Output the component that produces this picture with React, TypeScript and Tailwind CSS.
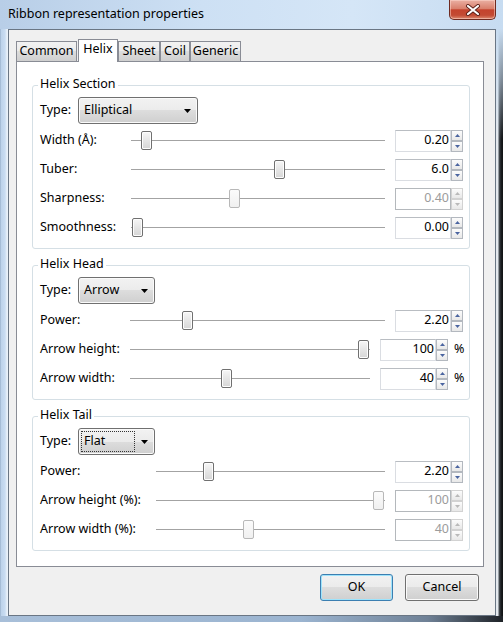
import React from "react";

const FONT = "font-['Noto_Sans','Open_Sans',sans-serif]";

function SpinArrow({ up, disabled }: { up?: boolean; disabled?: boolean }) {
  const c = disabled ? "#b9b9b9" : "#4a64a0";
  return (
    <div
      className={`flex-1 flex items-center justify-center border ${
        disabled ? "border-[#d2d2d2]" : "border-[#b3b8bf]"
      } bg-[linear-gradient(to_bottom,#fcfcfc,#e8e8e8)]`}
    >
      <svg width="5" height="3" viewBox="0 0 5 3">
        <path d={up ? "M0 3 L2.5 0 L5 3Z" : "M0 0 L2.5 3 L5 0Z"} fill={c} />
      </svg>
    </div>
  );
}

function Spin({ value, disabled }: { value: string; disabled?: boolean }) {
  return (
    <div className="flex h-[22px] shrink-0">
      <div
        className={`w-[56px] h-full bg-white border flex items-center justify-end pr-[1px] ${
          disabled
            ? "border-[#b4b8bc] text-[#9c9c9c]"
            : "border-[#dadde2] border-t-[#b9bdc2] text-black"
        }`}
      >
        {value}
      </div>
      <div className="w-[12px] h-full flex flex-col">
        <SpinArrow up disabled={disabled} />
        <SpinArrow disabled={disabled} />
      </div>
    </div>
  );
}

function Slider({ pos, disabled }: { pos: number; disabled?: boolean }) {
  return (
    <div className="relative flex-1 h-[21px] flex items-center">
      <div className="h-px w-full bg-[#a3a3a3]" />
      <div
        className={`absolute top-[1px] w-[11px] h-[19px] rounded-[2px] border ${
          disabled
            ? "border-[#b8b8b8] bg-[linear-gradient(to_bottom,#fbfbfb,#f0f0f0)]"
            : "border-[#707070] bg-[linear-gradient(to_bottom,#f7f7f7,#e4e4e4_55%,#d6d6d6)] shadow-[inset_0_0_0_1px_#fdfdfd]"
        }`}
        style={{ left: pos }}
      />
    </div>
  );
}

function Row({
  label,
  labelW,
  pos,
  value,
  disabled,
  pct,
}: {
  label: string;
  labelW: string;
  pos: number;
  value: string;
  disabled?: boolean;
  pct?: boolean;
}) {
  return (
    <div className={`flex items-center h-[29px] ${pct ? "pr-[4px]" : "pr-[6px]"}`}>
      <div className={`${labelW} shrink-0 whitespace-nowrap`}>{label}</div>
      <Slider pos={pos} disabled={disabled} />
      <div className="ml-[10px]">
        <Spin value={value} disabled={disabled} />
      </div>
      {pct && <span className="ml-[6px] w-[11px]">%</span>}
    </div>
  );
}

function Combo({ w, value, focused }: { w: string; value: string; focused?: boolean }) {
  return (
    <div
      className={`${w} h-[27px] rounded-[3px] border border-[#707070] flex items-center pl-[2px] bg-[linear-gradient(to_bottom,#f2f2f2_0%,#ebebeb_50%,#dddddd_50%,#cfcfcf_100%)] shadow-[inset_0_0_0_1px_#fafafa]`}
    >
      <div
        className={`flex-1 h-[21px] flex items-center pl-[2px] border border-dotted ${
          focused ? "border-[#333]" : "border-transparent"
        }`}
      >
        {value}
      </div>
      <div className="w-[19px] flex items-center justify-center">
        <svg width="7" height="4" viewBox="0 0 7 4">
          <path d="M0 0 L7 0 L3.5 4Z" fill="#000" />
        </svg>
      </div>
    </div>
  );
}

function Group({ title, children }: { title: string; children: React.ReactNode }) {
  return (
    <div className="relative border border-[#d5dfe5] rounded-[3px] pl-[7px] pt-[11px] pb-[6px]">
      <div className="absolute -top-[10px] left-[5px] px-[2px] bg-white leading-[16px]">
        {title}
      </div>
      {children}
    </div>
  );
}

function TypeRow({ w, value, focused }: { w: string; value: string; focused?: boolean }) {
  return (
    <div className="flex items-center h-[27px]">
      <span className="w-[38px] shrink-0">Type:</span>
      <Combo w={w} value={value} focused={focused} />
    </div>
  );
}

function Tab({ label, w, selected }: { label: string; w: string; selected?: boolean }) {
  if (selected) {
    return (
      <div
        className={`${w} h-[23px] -mb-px relative z-10 bg-white border border-b-0 border-[#898c95] flex items-center justify-center pb-[3px]`}
      >
        {label}
      </div>
    );
  }
  return (
    <div
      className={`${w} h-[20px] border border-b-0 border-[#898c95] flex items-center justify-center bg-[linear-gradient(to_bottom,#f2f2f2_0%,#ebebeb_50%,#dddddd_50%,#cfcfcf_100%)]`}
    >
      {label}
    </div>
  );
}

function Button({ label, w, def }: { label: string; w: string; def?: boolean }) {
  return (
    <div
      className={`${w} h-[27px] rounded-[3px] border flex items-center justify-center bg-[linear-gradient(to_bottom,#f2f2f2_0%,#ebebeb_50%,#dddddd_50%,#cfcfcf_100%)] ${
        def
          ? "border-[#3c7fb1] shadow-[inset_0_0_0_1px_#9ee3fb]"
          : "border-[#707070] shadow-[inset_0_0_0_1px_#fafafa]"
      }`}
    >
      {label}
    </div>
  );
}

export default function App() {
  return (
    <div
      className={`w-[503px] h-[622px] flex flex-col overflow-hidden text-[12.5px] text-black ${FONT} bg-[linear-gradient(to_right,#b8cee7,#cde0f4_40%,#d5e6f7_70%,#c7dcf1)]`}
    >
      {/* Title bar */}
      <div className="h-[29px] shrink-0 flex items-start justify-between pl-[8px] pr-[7px]">
        <div className="pt-[5px] leading-[18px] whitespace-nowrap">
          Ribbon representation properties
        </div>
        <div className="w-[47px] h-[20px] rounded-b-[5px] border border-t-0 border-[#6e2a20] flex items-center justify-center bg-[linear-gradient(to_bottom,#eab0a3_0%,#d9806c_45%,#c4432d_52%,#c34a33_80%,#dd8a70_100%)] shadow-[inset_0_0_0_1px_rgba(255,220,210,0.5)]">
          <svg width="16" height="12" viewBox="0 0 16 12">
            <path d="M3 2 L13 10 M13 2 L3 10" stroke="#5a2018" strokeWidth="4" strokeLinecap="round" />
            <path d="M3 2 L13 10 M13 2 L3 10" stroke="#ffffff" strokeWidth="2.2" strokeLinecap="round" />
          </svg>
        </div>
      </div>

      {/* Middle */}
      <div className="h-[587px] shrink-0 flex">
        <div className="w-[8px] shrink-0 bg-[linear-gradient(to_right,#8fa7c2_0px,#bcd2ea_1px,#c9dcf1_5px,#e9f1f9_7px,#e9f1f9_8px)]" />
        <div className="w-[488px] shrink-0 border border-[#6a7684] bg-[#f0f0f0] flex flex-col pt-[9px] pl-[7px] pr-[11px]">
          {/* Tabs */}
          <div className="flex items-end h-[22px]">
            <div className="mr-[1px]">
              <Tab label="Common" w="w-[61px]" />
            </div>
            <Tab label="Helix" w="w-[40px]" selected />
            <Tab label="Sheet" w="w-[42px]" />
            <Tab label="Coil" w="w-[30px]" />
            <Tab label="Generic" w="w-[51px]" />
          </div>
          {/* Pane */}
          <div className="border border-[#898c95] bg-white pt-[23px] pb-[15px] pl-[15px] pr-[13px] flex flex-col gap-[16px]">
            <Group title="Helix Section">
              <TypeRow w="w-[120px]" value="Elliptical" />
              <div className="mt-[2px]">
                <Row label="Width (Å):" labelW="w-[91px]" pos={10} value="0.20" />
                <Row label="Tuber:" labelW="w-[91px]" pos={143} value="6.0" />
                <Row label="Sharpness:" labelW="w-[91px]" pos={98} value="0.40" disabled />
                <Row label="Smoothness:" labelW="w-[91px]" pos={1} value="0.00" />
              </div>
            </Group>
            <Group title="Helix Head">
              <TypeRow w="w-[77px]" value="Arrow" />
              <div className="mt-[2px]">
                <Row label="Power:" labelW="w-[90px]" pos={52} value="2.20" />
                <Row label="Arrow height:" labelW="w-[90px]" pos={228} value="100" pct />
                <Row label="Arrow width:" labelW="w-[90px]" pos={91} value="40" pct />
              </div>
            </Group>
            <Group title="Helix Tail">
              <TypeRow w="w-[77px]" value="Flat" focused />
              <div className="mt-[2px]">
                <Row label="Power:" labelW="w-[116px]" pos={47} value="2.20" />
                <Row label="Arrow height (%):" labelW="w-[116px]" pos={217} value="100" disabled />
                <Row label="Arrow width (%):" labelW="w-[116px]" pos={87} value="40" disabled />
              </div>
            </Group>
          </div>
          {/* Buttons */}
          <div className="flex justify-end gap-[12px] mt-[7px] mr-[5px]">
            <Button label="OK" w="w-[73px]" def />
            <Button label="Cancel" w="w-[74px]" />
          </div>
        </div>
        <div className="w-[7px] shrink-0 bg-[image:linear-gradient(to_bottom,rgba(200,220,240,1)_0px,rgba(200,220,240,0.6)_50px,rgba(200,220,240,0)_110px),linear-gradient(to_right,#e4e9ee_0px,#e4e9ee_2px,#4a5056_3px,#1a1d20_5px,#101214_7px)]" />
      </div>

      {/* Bottom frame */}
      <div className="h-[6px] shrink-0 bg-[linear-gradient(to_right,#a8bfd9_0%,#9bb4d0_60%,#6f8196_85%,#1e2227_100%)]" />
    </div>
  );
}
